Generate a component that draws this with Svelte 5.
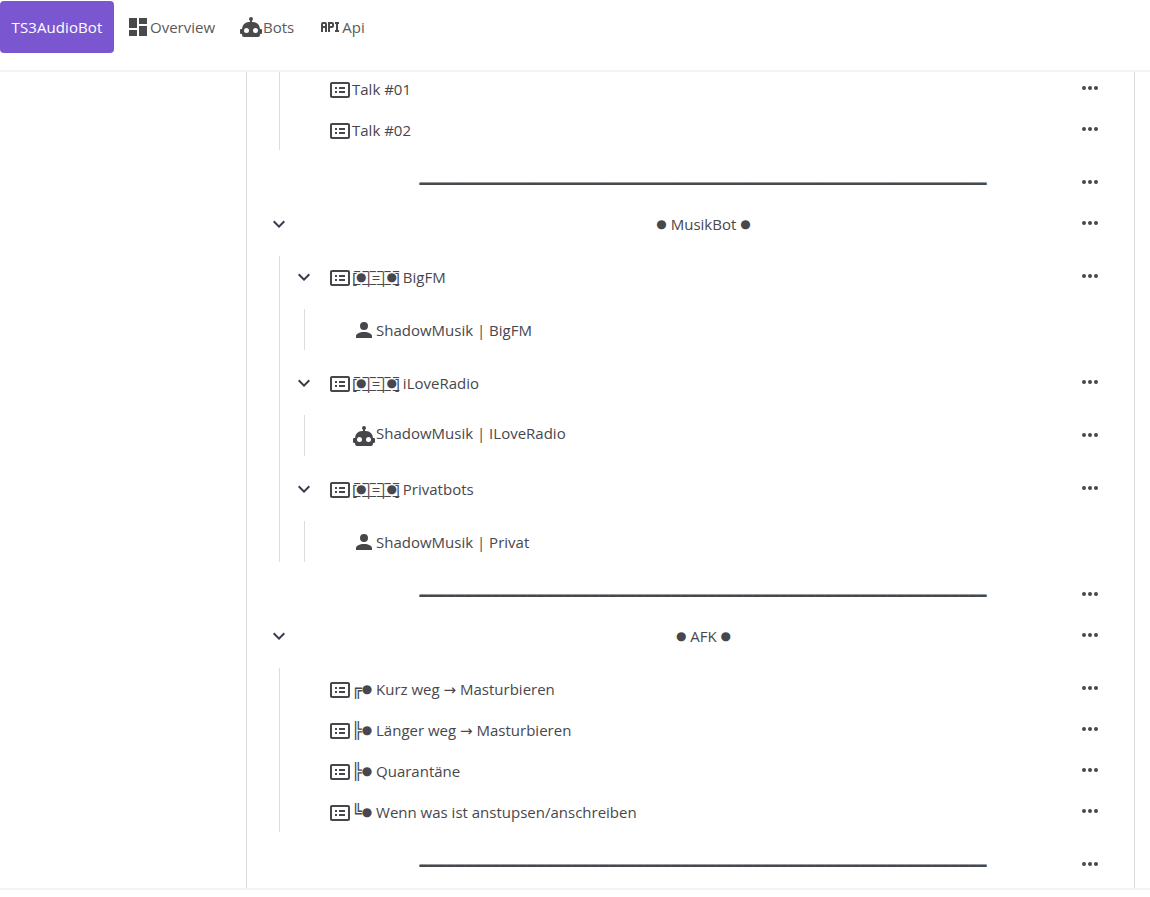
<script>
  const card = "M20,20H4C2.89,20 2,19.1 2,18V6C2,4.89 2.89,4 4,4H20A2,2 0 0,1 22,6V18A2,2 0 0,1 20,20M4,6V18H20V6H4M7,9H9V11H7V9M7,13H9V15H7V13M11,9H17V11H11V9M11,13H17V15H11V13Z";
  const robot = "M12,2A2,2 0 0,1 14,4C14,4.74 13.6,5.39 13,5.73V7H14A7,7 0 0,1 21,14H22A1,1 0 0,1 23,15V18A1,1 0 0,1 22,19H21V20A2,2 0 0,1 19,22H5A2,2 0 0,1 3,20V19H2A1,1 0 0,1 1,18V15A1,1 0 0,1 2,14H3A7,7 0 0,1 10,7H11V5.73C10.4,5.39 10,4.74 10,4A2,2 0 0,1 12,2M7.5,13A2.5,2.5 0 0,0 5,15.5A2.5,2.5 0 0,0 7.5,18A2.5,2.5 0 0,0 10,15.5A2.5,2.5 0 0,0 7.5,13M16.5,13A2.5,2.5 0 0,0 14,15.5A2.5,2.5 0 0,0 16.5,18A2.5,2.5 0 0,0 19,15.5A2.5,2.5 0 0,0 16.5,13Z";
  const account = "M12,4A4,4 0 0,1 16,8A4,4 0 0,1 12,12A4,4 0 0,1 8,8A4,4 0 0,1 12,4M12,14C16.42,14 20,15.79 20,18V20H4V18C4,15.79 7.58,14 12,14Z";
  const dash = "M13,3V9H21V3M13,21H21V11H13M3,21H11V15H3M3,13H11V3H3V13Z";
  const api = "M7 7H5A2 2 0 0 0 3 9V17H5V13H7V17H9V9A2 2 0 0 0 7 7M7 11H5V9H7M14 7H10V17H12V13H14A2 2 0 0 0 16 11V9A2 2 0 0 0 14 7M14 11H12V9H14M20 9V15H21V17H17V15H18V9H17V7H21V9Z";
  const chevron = "M7.41,8.58L12,13.17L16.59,8.58L18,10L12,16L6,10L7.41,8.58Z";
  const dots = "M16,12A2,2 0 0,1 18,10A2,2 0 0,1 20,12A2,2 0 0,1 18,14A2,2 0 0,1 16,12M10,12A2,2 0 0,1 12,10A2,2 0 0,1 14,12A2,2 0 0,1 12,14A2,2 0 0,1 10,12M4,12A2,2 0 0,1 6,10A2,2 0 0,1 8,12A2,2 0 0,1 6,14A2,2 0 0,1 4,12Z";
  const nav = [
    { icon: dash, label: "Overview" },
    { icon: robot, label: "Bots" },
    { icon: api, label: "Api" }
  ];
  const line = "━".repeat(63);
</script>

{#snippet icon(d, cls = "")}
  <svg class="icon {cls}" viewBox="0 0 24 24" aria-hidden="true"><path {d} /></svg>
{/snippet}

{#snippet more()}
  <button class="more" aria-label="Actions">{@render icon(dots)}</button>
{/snippet}

{#snippet channel(prefix, text)}
  <div class="row">
    <span class="toggle"></span>
    {@render icon(card, "card")}
    <span class="text">{#if prefix}<span class="box">{prefix}</span><span class="dot">●</span>{" "}{/if}{text}</span>
    {@render more()}
  </div>
{/snippet}

{#snippet parent(text, client, botClient)}
  <div class="row">
    <span class="toggle">{@render icon(chevron, "chev")}</span>
    {@render icon(card, "card")}
    <span class="text"><span class="radio">[̲̅<span class="dot">●</span>̲̅|̲̅=̲̅|̲̅<span class="dot">●</span>̲̅]</span>{" "}{text}</span>
    {@render more()}
  </div>
  <div class="children nested">
    <div class="row">
      <span class="deep"></span>
      {#if botClient}
        {@render icon(robot, "person")}
        <span class="text lifted">{client}</span>
        {@render more()}
      {:else}
        {@render icon(account, "person")}
        <span class="text">{client}</span>
      {/if}
    </div>
  </div>
{/snippet}

{#snippet spacer()}
  <div class="row centered spaced">
    <span class="text sep">{line}</span>
    {@render more()}
  </div>
{/snippet}

{#snippet heading(text)}
  <div class="row centered">
    <span class="toggle top">{@render icon(chevron, "chev")}</span>
    <span class="text"><span class="dot">●</span> {text} <span class="dot">●</span></span>
    {@render more()}
  </div>
{/snippet}

<div class="page">
  <nav class="navbar">
    <a class="brand" href="#top">TS3AudioBot</a>
    <div class="links">
      {#each nav as item}
        <a class="link" href="#top">{@render icon(item.icon)}<span>{item.label}</span></a>
      {/each}
    </div>
  </nav>

  <main class="layout">
    <div class="panel">
      <div class="tree">
        <div class="children first">
          {@render channel("", "Talk #01")}
          {@render channel("", "Talk #02")}
        </div>
        {@render spacer()}
        {@render heading("MusikBot")}
        <div class="children">
          {@render parent("BigFM", "ShadowMusik | BigFM", false)}
          {@render parent("iLoveRadio", "ShadowMusik | ILoveRadio", true)}
          {@render parent("Privatbots", "ShadowMusik | Privat", false)}
        </div>
        {@render spacer()}
        {@render heading("AFK")}
        <div class="children">
          {@render channel("╔", "Kurz weg → Masturbieren")}
          {@render channel("╠", "Länger weg → Masturbieren")}
          {@render channel("╠", "Quarantäne")}
          {@render channel("╚", "Wenn was ist anstupsen/anschreiben")}
        </div>
        {@render spacer()}
      </div>
    </div>
  </main>
  <div class="footer"></div>
</div>

<style>
  :global(body) {
    margin: 0;
    background: #fff;
  }
  .page {
    height: 897px;
    overflow: hidden;
    display: flex;
    flex-direction: column;
    font-family: "Open Sans", "Noto Sans", "DejaVu Sans", sans-serif;
    font-size: 15px;
    color: #47474d;
  }
  .navbar {
    height: 70px;
    flex: none;
    box-sizing: border-box;
    padding-top: 1px;
    display: flex;
    align-items: flex-start;
  }
  .brand {
    width: 114px;
    height: 52px;
    border-radius: 4px;
    background: #7a57d1;
    color: #fff;
    letter-spacing: 0.1px;
    text-decoration: none;
    display: flex;
    align-items: center;
    justify-content: center;
  }
  .links {
    display: flex;
    padding-left: 12px;
    height: 52px;
    gap: 24px;
  }
  .link {
    display: flex;
    align-items: center;
    color: #5a5a5a;
    text-decoration: none;
  }
  .link .icon {
    fill: #4a4a4a;
  }
  .icon {
    width: 24px;
    height: 24px;
    flex: none;
    fill: #46464b;
    display: block;
  }
  .chev {
    fill: #40384f;
  }
  .row > .card {
    margin-top: 3px;
  }
  .row > .person {
    margin-top: 1px;
  }
  .layout {
    height: 820px;
    flex: none;
    border-top: 2px solid #f3f3f3;
    border-bottom: 2px solid #f3f3f3;
    box-sizing: border-box;
    padding: 0 15px 0 246px;
  }
  .panel {
    height: 100%;
    border-left: 1px solid #dcdcdc;
    border-right: 1px solid #dcdcdc;
    overflow: hidden;
  }
  .tree {
    margin-top: -4px;
    padding: 0 24px 0 19px;
  }
  .row {
    height: 41px;
    display: flex;
    align-items: center;
  }
  .toggle {
    width: 61px;
    flex: none;
    display: flex;
    justify-content: flex-end;
    padding-right: 12px;
    box-sizing: border-box;
  }
  .deep {
    width: 60px;
    flex: none;
  }
  .text {
    flex: 1;
    min-width: 0;
    white-space: pre;
    position: relative;
  }
  .text.lifted {
    top: -3px;
  }
  .dot {
    font-size: 12px;
    position: relative;
    top: -2px;
  }
  .box {
    font-size: 16px;
    line-height: 1;
  }
  .radio {
    letter-spacing: -1px;
  }
  .more {
    width: 40px;
    height: 30px;
    margin: -2px 0 0;
    padding: 0;
    border: 0;
    background: none;
    display: flex;
    align-items: center;
    justify-content: center;
    flex: none;
  }
  .children {
    margin: 12px 0 12px 13px;
    border-left: 1px solid #dcdcdc;
  }
  .children .row {
    margin-left: -13px;
  }
  .children.nested {
    margin-left: 24px;
  }
  .children.first {
    margin-top: 0;
  }
  .centered .text {
    text-align: center;
  }
  .toggle.top {
    width: 26px;
    padding-right: 0;
    justify-content: center;
    margin-right: 45px;
  }
  .centered .sep {
    overflow: hidden;
    letter-spacing: -0.03px;
  }
  .spaced {
    padding-left: 70px;
  }
</style>
